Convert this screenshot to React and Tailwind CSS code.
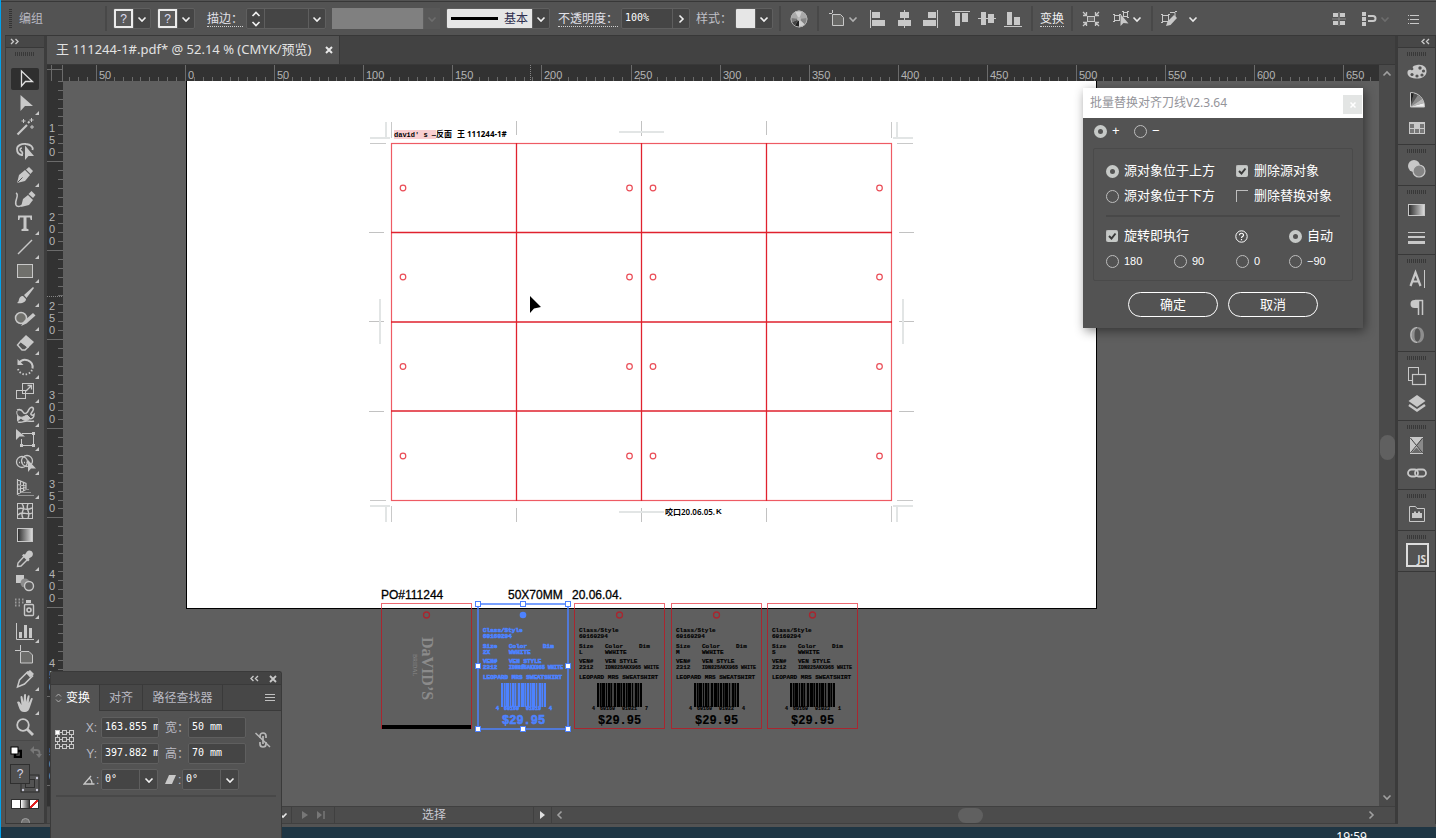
import React, { useEffect, useState } from "react";

const CJK = "font-['Liberation_Sans','Noto_Sans_CJK_SC',sans-serif]";
const UI = "font-['Noto_Sans','Noto_Sans_CJK_SC',sans-serif]";
const MONO = "font-['DejaVu_Sans_Mono','Noto_Sans_CJK_SC',monospace]";

/* ---------- small shared pieces ---------- */

function Icon({ size = 24, children, className = "" }) {
  return (
    <svg width={size} height={size} viewBox={`0 0 ${size} ${size}`} fill="none" stroke="currentColor" aria-hidden="true" className={`shrink-0 ${className}`}>
      {children}
    </svg>
  );
}

function Chevron({ dir = "down", className = "text-[#e8e8e8]" }) {
  const d = { down: "M2.500 4.500L6 8l3.500-3.500", up: "M2.500 7.500L6 4l3.500 3.500", right: "M4.500 2.500L8 6 4.500 9.500", left: "M7.500 2.500L4 6l3.500 3.500" }[dir];
  return (
    <svg width="12" height="12" viewBox="0 0 12 12" fill="none" stroke="currentColor" strokeWidth="1.600" aria-hidden="true" className={`shrink-0 ${className}`}>
      <path d={d} />
    </svg>
  );
}

function DoubleChevron({ left }) {
  return (
    <svg width="9" height="7" viewBox="0 0 9 7" fill="none" stroke="#c8c8c8" strokeWidth="1.400" aria-hidden="true">
      <path d={left ? "M3.500 1L1 3.500l2.500 2.500M8 1L5.500 3.500 8 6" : "M1 1l2.500 2.500L1 6M5.500 1L8 3.500 5.500 6"} />
    </svg>
  );
}

function Grip() {
  return <div className="h-[4px] w-[20px] bg-[repeating-linear-gradient(90deg,#383838_0_1px,transparent_1px_2px)]" />;
}

function Divider() {
  return <div className="h-[25px] w-[2px] shrink-0 bg-[#484848]" />;
}

function DropButton({ label, dir = "down", disabled, w = "w-[17px]" }) {
  return (
    <button type="button" aria-label={label} disabled={disabled} className={`flex h-full ${w} shrink-0 items-center justify-center border-l border-[#5e5e5e]`}>
      <Chevron dir={dir} className={disabled ? "text-[#6d6d6d]" : "text-[#f0f0f0]"} />
    </button>
  );
}

const box = "flex h-[21px] shrink-0 items-stretch overflow-hidden rounded-[2px] border border-[#5f5f5f] bg-[#454545]";

/* ---------- control bar ---------- */

function UnknownPaint({ label }) {
  return (
    <div className={`${box} w-[38px]`}>
      <button type="button" aria-label={label} className={`flex w-[19px] items-center justify-center border-2 border-[#ececec] bg-[#5a5a5a] text-[12px] leading-none text-[#dcdcf0] ${CJK}`}>?</button>
      <DropButton label={`${label}选项`} />
    </div>
  );
}

function AlignIcon({ kind }) {
  const shapes = {
    left: <><path d="M1.500 0v18" /><rect x="3" y="2" width="8" height="6" fill="currentColor" stroke="none" /><rect x="3" y="10" width="13" height="6" fill="currentColor" stroke="none" /></>,
    hcenter: <><path d="M9.500 0v18" /><rect x="5" y="2" width="9" height="6" fill="currentColor" stroke="none" /><rect x="3" y="10" width="13" height="6" fill="currentColor" stroke="none" /></>,
    right: <><path d="M16.500 0v18" /><rect x="7" y="2" width="8" height="6" fill="currentColor" stroke="none" /><rect x="2" y="10" width="13" height="6" fill="currentColor" stroke="none" /></>,
    top: <><path d="M0 1.500h18" /><rect x="3" y="3" width="5" height="13" fill="currentColor" stroke="none" /><rect x="10" y="3" width="6" height="9" fill="currentColor" stroke="none" /></>,
    vcenter: <><path d="M0 8.500h18" /><rect x="3" y="2" width="5" height="13" fill="currentColor" stroke="none" /><rect x="10" y="4" width="6" height="9" fill="currentColor" stroke="none" /></>,
    bottom: <><path d="M0 16.500h18" /><rect x="3" y="2" width="5" height="13" fill="currentColor" stroke="none" /><rect x="10" y="7" width="6" height="8" fill="currentColor" stroke="none" /></>,
  };
  return (
    <button type="button" aria-label={`align ${kind}`}>
      <Icon size={18}>{shapes[kind]}</Icon>
    </button>
  );
}

function ControlBar() {
  return (
    <header className={`flex h-[34px] shrink-0 items-center gap-[6px] border-b border-[#383838] bg-[#535353] pl-[4px] text-[12px] text-[#c8c8c8] ${CJK}`}>
      <div className="h-[20px] w-[3px] bg-[repeating-linear-gradient(180deg,#333_0_1px,transparent_1px_2px)]" />
      <span className="w-[81px] pl-px text-[#b9b9c2]">编组</span>
      <Divider />
      <UnknownPaint label="填色" />
      <UnknownPaint label="描边颜色" />
      <label htmlFor="stroke-w" className="w-[39px] shrink-0 pl-[6px] leading-[14px] whitespace-nowrap text-[#e0e0e8]">
        <span className="border-b border-dotted border-[#d0d0d0]">描边：</span>
      </label>
      <div className={`${box} w-[80px]`}>
        <button type="button" aria-label="描边粗细增减" className="flex w-[17px] shrink-0 flex-col items-center justify-center">
          <svg width="10" height="16" viewBox="0 0 10 16" fill="none" stroke="#f0f0f0" strokeWidth="1.600" aria-hidden="true"><path d="M1.500 5L5 1.500 8.500 5M1.500 11L5 14.500 8.500 11" /></svg>
        </button>
        <input id="stroke-w" type="text" className="min-w-0 flex-1 border-l border-[#5e5e5e] bg-transparent" />
        <DropButton label="描边粗细" />
      </div>
      <div className="flex h-[21px] w-[108px] shrink-0 items-stretch bg-[#585858]">
        <div className="flex-1 bg-[#808080]" />
        <DropButton label="变量宽度配置文件" disabled />
      </div>
      <div className={`${box} w-[104px]`}>
        <button type="button" className="flex flex-1 items-center gap-[6px] bg-[#e6e6e6] pl-[4px] text-[#303050]">
          <span className="h-[3px] w-[47px] bg-black" />
          <span>基本</span>
        </button>
        <DropButton label="画笔定义" />
      </div>
      <label htmlFor="opacity" className="w-[59px] shrink-0 pl-[2px] leading-[14px] whitespace-nowrap text-[#e0e0e8]">
        <span className="border-b border-dotted border-[#d0d0d0]">不透明度：</span>
      </label>
      <div className={`${box} w-[69px]`}>
        <input id="opacity" type="text" defaultValue="100%" className={`min-w-0 flex-1 bg-transparent pb-[3px] pl-[3px] text-[10px] text-white ${MONO}`} />
        <DropButton label="不透明度选项" dir="right" />
      </div>
      <span className="w-[33px] shrink-0 whitespace-nowrap text-[#c0c0c8]">样式：</span>
      <div className={`${box} w-[38px]`}>
        <button type="button" aria-label="图形样式" className="w-[19px] bg-[#e6e6e6]" />
        <DropButton label="样式选项" />
      </div>
      <Divider />
      <button type="button" aria-label="重新着色图稿" className="flex w-[24px] shrink-0 justify-center">
        <Icon size={18}>
          <g stroke="none">
            <circle cx="9" cy="9" r="8.300" fill="#a8a8a8" />
            <path d="M9 9L5 1.800A8.300 8.300 0 0 1 12 1.300z" fill="#cfcfcf" />
            <path d="M9 9l8.200-1A8.300 8.300 0 0 1 15 14.700z" fill="#858585" />
            <path d="M9 9l0 8.300A8.300 8.300 0 0 1 4.500 16z" fill="#222" />
            <path d="M9 9L4.500 16A8.300 8.300 0 0 1 1.500 12.500z" fill="#444" />
            <path d="M9 9L1.500 12.500A8.300 8.300 0 0 1 .9 8z" fill="#777" />
            <path d="M9 9v8.300a8.300 8.300 0 0 0 6-2.600z" fill="#d0d0d0" />
            <circle cx="9" cy="9" r="2" fill="#b8b8b8" />
          </g>
          <circle cx="9" cy="9" r="8" stroke="#b0b0b0" />
        </Icon>
      </button>
      <Divider />
      <button type="button" aria-label="对齐画板" className="flex w-[38px] shrink-0 items-center justify-center">
        <Icon size={18}><path d="M3.500 0v3M0 3.500h3M3.500 4.500v11h11v-8l-3-3z" fill="#686866" /></Icon>
        <Chevron className="text-[#b0b0b0]" />
      </button>
      <div className="flex shrink-0 items-center gap-[13px] pr-[3px]">
        <div className="flex gap-[8px]"><AlignIcon kind="left" /><AlignIcon kind="hcenter" /><AlignIcon kind="right" /></div>
        <div className="flex gap-[8px]"><AlignIcon kind="top" /><AlignIcon kind="vcenter" /><AlignIcon kind="bottom" /></div>
      </div>
      <Divider />
      <button type="button" className="w-[26px] shrink-0 pl-px text-left leading-[14px] whitespace-nowrap text-[#f0f0f0]">
        <span className="border-b border-dotted border-[#d0d0d0]">变换</span>
      </button>
      <Divider />
      <button type="button" aria-label="隔离选中的对象" className="flex w-[24px] shrink-0 justify-center">
        <Icon size={18}>
          <rect x="5.500" y="6.500" width="7" height="5" fill="#6c6c6c" />
          <path d="M1 2l3 3M4.500 2v3.500H1M17 2l-3 3M13.500 2v3.500H17M1 16l3-3M4.500 16v-3.500H1M17 16l-3-3M13.500 16v-3.500H17" strokeWidth="1.300" />
        </Icon>
      </button>
      <button type="button" aria-label="选择类似的对象" className="flex w-[36px] shrink-0 items-center justify-center">
        <Icon size={20}>
          <rect x="3.500" y="6.500" width="5" height="5" /><rect x="12.500" y="3.500" width="4" height="4" />
          <path d="M2 5.500h2M8 5.500h2M2 12.500h2M11 2.500h2M16 2.500h2M16 8.500h2" />
          <path d="M9.500 5v12l3-3 5 .5z" fill="currentColor" stroke="none" />
        </Icon>
        <Chevron />
      </button>
      <Divider />
      <button type="button" aria-label="编辑剪切路径" className="flex w-[40px] shrink-0 items-center justify-between">
        <Icon size={20}>
          <rect x="3.500" y="6.500" width="6" height="6" /><path d="M2 5.500h2M9 5.500h2M2 13.500h2M11 3.500h5v5M16 2.500h2" />
          <path d="M7 17l1.500-4.500L15 6l3 3-6.500 7z" fill="currentColor" stroke="none" />
        </Icon>
        <Chevron />
      </button>
      <div className="ml-auto flex items-center gap-[14px] pr-[15px]">
        <button type="button" aria-label="对齐像素网格">
          <Icon size={16}><path d="M8 1v14M1 8h14" stroke="#8a8a8a" /><g fill="currentColor" stroke="none"><rect x="2" y="2" width="5" height="4" /><rect x="9" y="2" width="5" height="4" /><rect x="2" y="10" width="5" height="4" /><rect x="9" y="10" width="5" height="4" /></g></Icon>
        </button>
        <button type="button" aria-label="对齐像素" className="flex items-center gap-[2px]">
          <Icon size={16}><g fill="currentColor" stroke="none"><rect x="1" y="1" width="4" height="4" /><rect x="1" y="6" width="4" height="4" /><rect x="1" y="11" width="4" height="4" /></g><path d="M7 5h5a2.500 2.500 0 0 1 0 5H7" strokeWidth="2" /></Icon>
          <Chevron className="text-[#6d6d6d]" />
        </button>
        <button type="button" aria-label="控制面板菜单">
          <Icon size={16}><path d="M5 4.500h9M5 8.500h9M5 12.500h9M3 4.500h1M3 8.500h1M3 12.500h1" /></Icon>
        </button>
      </div>
    </header>
  );
}

/* ---------- tool box ---------- */

const F = { fill: "currentColor", stroke: "none" };

const tools = [
  ["选择工具", 0, <path d="M8.500 4v15l4-4.500h7z" strokeWidth="1.300" />],
  ["直接选择工具", 1, <path d="M7.500 4v16l4.500-5h8z" {...F} />],
  ["魔棒工具", 0, <><path d="M4.500 19.500L14 10" strokeWidth="2.200" /><path d="M15 8l1.500-1.500" strokeWidth="2" /><path d="M10.500 4v4M8.500 6h4M18.500 3v4M16.500 5h4M19 10v4M17 12h4" /></>],
  ["套索工具", 0, <><path d="M10 16c-5 0-6-3-6-6 0-4 5-5.500 9-5 5 .5 7.500 3 6.500 6" strokeWidth="1.800" /><path d="M9 9c-2 0-2.500 2-1 3s2.500 3 0 4.500" strokeWidth="1.600" /><path d="M12 6.500V21l3.500-4H21z" {...F} /></>],
  ["钢笔工具", 1, <><path d="M4 20l2-8 6-5 5 5-5 6z" {...F} /><path d="M13 6.500l3-2.500 4 4-2.500 3z" {...F} /><path d="M4.500 19.500l5-5" stroke="#535353" /></>],
  ["曲率工具", 0, <><path d="M8 20l2-8 5-4 5 5-4 5z" {...F} /><path d="M15.500 7l3-3 4 4-2.500 3z" {...F} /><path d="M3 6c4 2-2 8 0 12 1 2 4 2 6 0" strokeWidth="1.500" /></>],
  ["文字工具", 1, <path d="M5 4.500h14v4.500h-1.300l-.7-2.500h-3.500v11l2 .7V20H8.500v-1.800l2-.7v-11H7L6.300 9H5z" {...F} />],
  ["直线段工具", 1, <path d="M5 19L19 5" strokeWidth="1.500" />],
  ["矩形工具", 1, <rect x="4.500" y="5.500" width="15" height="13" fill="#70706c" />],
  ["画笔工具", 1, <><path d="M20 4l-9 8 2.500 3L21 5z" {...F} /><path d="M10 13l3 3c0 3-4 5-9 4 2-1 1.500-3 2.500-5 1-1.700 2.500-2 3.500-2z" {...F} /></>],
  ["Shaper 工具", 1, <><circle cx="8" cy="11" r="5.500" fill="#70706c" strokeWidth="1.500" /><path d="M8 19l3-5 9-8 2.500 2.500-9 8z" {...F} /></>],
  ["橡皮擦工具", 1, <><path d="M13 4l8 7-6 6-8-7z" {...F} /><path d="M7.500 10.500L4.500 14l4.500 5h3l3-3z" strokeWidth="1.400" /></>],
  ["旋转工具", 1, <><path d="M6 8a7.500 7.500 0 0 1 13.500 5.500" strokeWidth="2" /><path d="M4.500 4v6h6z" {...F} /><path d="M5 14a7.500 7.500 0 0 0 14 1" strokeWidth="1.800" strokeDasharray="1.500 1.800" /></>],
  ["比例缩放工具", 1, <><rect x="9.500" y="4.500" width="11" height="10" /><rect x="3.500" y="11.500" width="9" height="8" /><path d="M13 12l5-5M14.500 6.500H18.500V10.500" strokeWidth="1.300" /></>],
  ["宽度工具", 1, <><path d="M4 7c3-1 5 0 6 2s3 2 4.500 0S16 5 18 4.500s3 1 2 3-3 3-2 4 2 1 3 0c0 3-2 5-5 4" strokeWidth="1.600" /><path d="M4 8c-1 4 2 7 6 6l4-2 3 3c-2 3-6 3-8 1s-3 2-5 2" fill="currentColor" strokeWidth="1" /><path d="M5 19c4 1 6-1 9-1s5 1 7 0" strokeWidth="1.400" /></>],
  ["自由变换工具", 1, <><path d="M3 2v11l3.500-3.500H12z" {...F} /><path d="M9 6.500h12M20.500 6v13M8.500 12v7M8 18.500h13" /><path d="M19 5h3v3h-3zM19 17h3v3h-3zM7 17h3v3H7z" {...F} /></>],
  ["形状生成器工具", 1, <><circle cx="9" cy="11" r="5.500" strokeWidth="1.300" /><circle cx="14" cy="10" r="5.500" strokeWidth="1.300" /><path d="M6 11.500h8" strokeDasharray="1 1.500" strokeWidth="1.500" /><path d="M15 9v12l3-3.500h5z" {...F} /></>],
  ["透视网格工具", 1, <><path d="M4.500 4v16M4 4.500l9 4v6l-9 5M7.500 6v12M10.500 7.500v9M4 9.500l9 1.500M4 14.500l9-2" strokeWidth="1.200" /><path d="M12 14.500h4M9 17.500h9M5 20.500h16" stroke="#949494" /></>],
  ["网格工具", 0, <><rect x="4.500" y="4.500" width="15" height="15" /><path d="M5 10c5-3 6 3 14-1M5 16c4-5 9 1 14-2M9 5c5 5-3 8 1 14M15 5c-3 5 3 8 0 14" strokeWidth="1.400" /></>],
  ["渐变工具", 0, <rect x="4.500" y="5.500" width="15" height="13" fill="url(#gradTool)" />],
  ["吸管工具", 1, <><path d="M14 4.500c3-3 8 1 5 5l-3 2 .5 1.500-1.500 1.500-6-6 1.500-1.500 1.500.5z" {...F} /><path d="M11 9.500l-6 6.500-.5 3.500 3.500-.5 6.500-6.500" strokeWidth="1.400" /></>],
  ["混合工具", 0, <><rect x="3" y="4" width="8" height="8" {...F} /><circle cx="12" cy="12" r="4.500" fill="#8c8c8c" stroke="none" /><circle cx="16" cy="15" r="4.500" fill="#5c5c5c" strokeWidth="1.400" /></>],
  ["符号喷枪工具", 1, <><rect x="11.500" y="9.500" width="9" height="11" rx="1" strokeWidth="1.400" /><circle cx="16" cy="15" r="2" strokeWidth="1.600" /><path d="M13 5h5v3h-5z" {...F} /><path d="M2 4.500h10M2 7.500h9M2 10.500h6" strokeWidth="2" strokeDasharray="1.500 2" stroke="#9a9a9a" /></>],
  ["柱形图工具", 1, <><path d="M3.500 4v16.500H21" /><rect x="6" y="13" width="3" height="6" {...F} /><rect x="11" y="6" width="3" height="13" {...F} /><rect x="16" y="9" width="3" height="10" {...F} /></>],
  ["画板工具", 0, <path d="M7.500 2v6M2 7.500h5M7.500 9v11h12v-8l-3.500-3.500H9z" fill="#6c6c6a" />],
  ["切片工具", 1, <><path d="M4.500 20l2-7 8-8 5 4-8 8z" strokeWidth="1.500" /><path d="M13 6l4-3 4 4-4 3.500z" {...F} /></>],
  ["抓手工具", 1, <path d="M4 11c1-1 2.500-.5 3 .5L8.500 14 7.500 6c0-1.500 1.800-1.500 2 0l1 5 .5-7c.2-1.300 2-1.300 2 0v7l1.700-6c.5-1.300 2-.8 1.900.4L15.700 12l2.300-4.500c.8-1 2-.3 1.600.8L17 16c-1 3-2 5-6 5-4.500 0-5-5-7-10z" {...F} />],
  ["缩放工具", 0, <><circle cx="10" cy="10" r="5.800" strokeWidth="1.800" /><path d="M14 14l6 6" strokeWidth="2.800" /></>],
];

function ToolBox() {
  return (
    <aside className="flex w-[42px] shrink-0 flex-col border-r-[3px] border-l border-[#3d3d3d] bg-[#535353] text-[#c8c8c8]">
      <button type="button" aria-label="展开工具" className="flex h-[12px] shrink-0 items-center border-b border-[#383838] bg-[#474747] pl-[4px]"><DoubleChevron /></button>
      <div className="flex h-[19px] shrink-0 justify-center pt-[4px]"><Grip /></div>
      <svg width="0" height="0" className="absolute" aria-hidden="true">
        <defs>
          <linearGradient id="gradTool"><stop offset="0" stopColor="#2a2a2a" /><stop offset="1" stopColor="#e0e0e0" /></linearGradient>
        </defs>
      </svg>
      <div className="flex shrink-0 flex-col items-center">
        {tools.map(([name, more, art], i) => (
          <button key={name} type="button" aria-label={name} className={`relative my-px flex h-[22px] w-[28px] items-center justify-center ${i === 0 ? "rounded-[2px] bg-[#2f2f2f] text-[#e0e0e0]" : ""}`}>
            <Icon>{art}</Icon>
            {more ? <svg width="4" height="4" viewBox="0 0 4 4" className="absolute right-0 -bottom-px" aria-hidden="true"><path d="M4 0v4H0z" fill="#c8c8c8" /></svg> : null}
          </button>
        ))}
      </div>
      <div className="mx-[4px] mt-px h-px shrink-0 bg-[#484848]" />
      <div className="flex h-[22px] shrink-0 items-center justify-between pr-[2px] pl-[4px]">
        <button type="button" aria-label="默认填色和描边">
          <Icon size={12}><rect x="5" y="5" width="6" height="6" fill="none" stroke="#000" strokeWidth="2.500" /><rect x="1" y="1" width="7" height="7" fill="#fff" stroke="#000" /></Icon>
        </button>
        <button type="button" aria-label="互换填色和描边" className="text-[#777]">
          <Icon size={12}><path d="M3 4h3.500a3 3 0 0 1 3 3v2" strokeWidth="1.800" /><path d="M0 4l4-4v8zM6 8h6l-3 4z" {...F} /></Icon>
        </button>
      </div>
      <button type="button" aria-label="填色和描边" className="flex h-[32px] shrink-0 justify-center">
        <Icon size={32} className="text-[#2f2f2f]">
          <rect x="12" y="12" width="18" height="17" fill="#535353" /><rect x="16.500" y="16.500" width="9" height="8" />
          <circle cx="14" cy="27" r="1.200" fill="#c8c8d8" stroke="none" /><circle cx="28" cy="27" r="1.200" fill="#c8c8d8" stroke="none" /><circle cx="28" cy="15" r="1.200" fill="#c8c8d8" stroke="none" />
          <rect x="1.500" y="1.500" width="19" height="19" fill="#505050" />
          <text x="11" y="15" textAnchor="middle" fontSize="12" fill="#d8d8e8" stroke="none" fontFamily="Liberation Sans, sans-serif">?</text>
        </Icon>
      </button>
      <div className="mx-auto mt-[4px] flex h-[10px] w-[28px] shrink-0 border border-[#2f2f2f]">
        <button type="button" aria-label="颜色" className="flex-1 bg-white" />
        <button type="button" aria-label="渐变" className="flex-1 border-x border-[#2f2f2f] bg-linear-to-r from-white to-[#444]" />
        <button type="button" aria-label="无" className="flex-1 bg-[linear-gradient(135deg,#fff_0_38%,#e02020_38%_62%,#fff_62%)]" />
      </div>
      <div className="flex min-h-0 flex-1 justify-center overflow-hidden border-b border-[#383838] pt-[9px]"><span className="size-[9px] shrink-0 rounded-full border border-[#a0a0a0] bg-[#757575]" /></div>
    </aside>
  );
}

/* ---------- rulers ---------- */

const PITCH = 8.91;

function useWindowSize() {
  const [size, setSize] = useState([window.innerWidth, window.innerHeight]);
  useEffect(() => {
    const update = () => setSize([window.innerWidth, window.innerHeight]);
    window.addEventListener("resize", update);
    return () => window.removeEventListener("resize", update);
  }, []);
  return size;
}

function TopRuler() {
  const [width] = useWindowSize();
  const end = width - 57;
  const ticks = [];
  for (let k = -13; 186 + k * PITCH < end; k++) ticks.push(k);
  return (
    <svg width="100%" height="16" className="block bg-[#323232]" aria-hidden="true">
      <g transform="translate(-63 -65)">
        {ticks.map((k) => {
          const x = Math.round(186 + k * PITCH) - 0.5;
          return <path key={k} d={`M${x} ${k % 10 === 0 ? 65 : 77}V81`} stroke="#6b6b6b" />;
        })}
        <path d="M530.500 65V81" stroke="#858585" strokeDasharray="1 1" />
        {ticks.filter((k) => k % 10 === 0 && 186 + k * PITCH + 22 < end).map((k) => (
          <text key={k} x={Math.round(186 + k * PITCH) + 2} y="79" fontSize="11" fill="#b4b4b4" fontFamily="Liberation Sans, sans-serif">{Math.abs(k * 5)}</text>
        ))}
      </g>
    </svg>
  );
}

function SideRuler() {
  const [, height] = useWindowSize();
  const end = height - 32;
  const ticks = [];
  for (let k = -9; 161 + k * PITCH < end; k++) ticks.push(k);
  return (
    <svg width="16" height="100%" className="block bg-[#323232]" aria-hidden="true">
      <g transform="translate(-47 -81)">
        {ticks.map((k) => {
          const y = Math.round(161 + k * PITCH) + 0.5;
          return <path key={k} d={`M${k % 10 === 0 ? 47 : 58} ${y}H63`} stroke="#6b6b6b" />;
        })}
        <path d="M47 296.500H63" stroke="#858585" strokeDasharray="1 1" />
        {ticks.filter((k) => k % 10 === 0).map((k) => (
          <g key={k} fontSize="11" fill="#b4b4b4" fontFamily="Liberation Sans, sans-serif">
            {String(150 + k * 5).split("").map((c, i) => (
              <text key={i} x="49" y={Math.round(161 + k * PITCH) - 29 + i * 12}>{c}</text>
            ))}
          </g>
        ))}
      </g>
    </svg>
  );
}

/* ---------- artwork ---------- */

const BARS = [2, 1, 1, 1, 3, 1, 1, 1, 2, 1, 1, 2, 2, 1, 3, 1, 1, 1, 2, 1, 1, 1, 3, 1, 1, 2, 2, 1, 1, 1, 2];

function Barcode({ x, y, color }) {
  let at = x;
  return (
    <g fill={color}>
      {BARS.map((w, i) => {
        const here = at;
        at += w;
        return <rect key={i} x={here} y={y} width={w} height="24" opacity={i % 2 === 0 ? 1 : i % 3 === 0 ? 0.65 : 0.3} />;
      })}
    </g>
  );
}

const tags = [
  { x: 478, size: "2X", code: ["60160", "01019", "4"], selected: true },
  { x: 574, size: "L", code: ["60160", "01021", "7"] },
  { x: 671, size: "M", code: ["60160", "01022", "4"] },
  { x: 767, size: "S", code: ["60160", "01023", "1"] },
];

function TagFrame({ x }) {
  return (
    <g fill="none">
      <rect x={x + 0.5} y="603.500" width="90" height="125" stroke="#a9262f" />
      <path d={`M${x} 603.500h91M${x + 0.5} 603v5M${x + 90.5} 603v5`} stroke="#ee6a72" />
      <circle cx={x + 45.5} cy="615" r="3" stroke="#a9262f" strokeWidth="1.300" />
    </g>
  );
}

function PriceTag({ x, size, code, selected }) {
  const ink = selected ? "#4d82ff" : "#000";
  const l = x + 5;
  return (
    <g>
      {!selected && <TagFrame x={x} />}
      <g fill={ink} stroke={ink} strokeWidth={selected ? 0.6 : 0.15} fontFamily="Liberation Mono, monospace" fontWeight="700" fontSize="6">
        <text x={l} y="632">Class/Style</text>
        <text x={l} y="638">60160294</text>
        <text x={l} y="648">Size</text><text x={l + 26} y="648">Color</text><text x={l + 60} y="648">Dim</text>
        <text x={l} y="654">{size}</text><text x={l + 26} y="654">WWHITE</text>
        <text x={l} y="663">VEN#</text><text x={l + 26} y="663">VEN STYLE</text>
        <text x={l} y="669">2312</text><text x={l + 26} y="669" fontSize="5">IDN825AKX965 WHITE</text>
        <text x={l} y="679">LEOPARD MRS SWEATSHIRT</text>
        <text x={x + 18} y="710" fontSize="5">4</text>
        <text x={x + 26} y="710" fontSize="5">{code[0]}</text>
        <text x={x + 48} y="710" fontSize="5">{code[1]}</text>
        <text x={x + 71} y="710" fontSize="5">{code[2]}</text>
        <text x={x + 24} y="724" fontSize="12">$29.95</text>
      </g>
      <Barcode x={x + 23} y={683} color={ink} />
    </g>
  );
}

function Selection({ x }) {
  const w = 90, y = 604, h = 125;
  const pts = [[0, 0], [w / 2, 0], [w, 0], [0, h / 2], [w, h / 2], [0, h], [w / 2, h], [w, h]];
  return (
    <g>
      <rect x={x} y={y} width={w} height={h} fill="none" stroke="#4d82ff" strokeWidth="1.500" />
      <circle cx={x + 45} cy="615" r="3.300" fill="#4d82ff" />
      <circle cx={x + 45} cy="666" r="2" fill="#4d82ff" />
      {pts.map(([dx, dy]) => (
        <rect key={`${dx}-${dy}`} x={Math.floor(x + dx) - 2.5} y={Math.floor(y + dy) - 2.5} width="5" height="5" fill="#fff" stroke="#4d82ff" />
      ))}
    </g>
  );
}

function CornerMarks() {
  return (
    <>
      <path d="M386 122V139M370 138H390" stroke="#e2e5e5" strokeWidth="2" />
      <path d="M391.500 122V138M370 143.500H386" stroke="#c9c9c9" />
    </>
  );
}

function CropMarks() {
  return (
    <g fill="none">
      <CornerMarks />
      <g transform="translate(1283 0) scale(-1 1)"><CornerMarks /></g>
      <g transform="translate(0 644) scale(1 -1)"><CornerMarks /></g>
      <g transform="translate(1283 644) scale(-1 -1)"><CornerMarks /></g>
      <path d="M516.500 121V135M641.500 121V136M766.500 121V135M516.500 508V522M641.500 508V522M766.500 508V522M369 232.500H384M369 321.500H384M369 411.500H384M899 232.500H914M899 321.500H914M899 411.500H914" stroke="#c2c2c2" />
      <path d="M619 132H664M619 512H664M380 299V344M903 299V344" stroke="#e2e5e5" strokeWidth="2" />
    </g>
  );
}

function Artwork() {
  return (
    <svg width="100%" height="100%" className="block bg-[#5f5f5f]">
      <g transform="translate(-63 -81)">
        <rect x="186.500" y="70" width="910" height="538.500" fill="#fff" stroke="#000" />
        <CropMarks />
        <rect x="391.500" y="143.500" width="500" height="357" fill="none" stroke="#ee5b64" strokeWidth="1.200" />
        <path d={[516.5, 641.5, 766.5].map((x) => `M${x} 143V501`).join("")} stroke="#e0222e" strokeWidth="1.300" />
        <path d={[232.5, 322, 411].map((y) => `M391 ${y}H892`).join("")} stroke="#e0222e" strokeWidth="1.300" />
        {[188, 277, 366.5, 456].map((cy) =>
          [403, 629.5, 653, 879.5].map((cx) => <circle key={`${cx}-${cy}`} cx={cx} cy={cy} r="2.800" fill="none" stroke="#ea4d57" strokeWidth="1.200" />)
        )}
        <rect x="394" y="130" width="42" height="9" fill="#f8cfd1" />
        <g fontSize="8" fontWeight="700" fontFamily="Noto Sans, Noto Sans CJK SC, sans-serif" fill="#000">
          <text x="394" y="137" fontSize="7" fontFamily="Liberation Mono, monospace">{"david' s —"}</text>
          <text x="436" y="137">反面</text>
          <text x="457" y="137">王</text>
          <text x="467" y="137">111244-1#</text>
          <text x="665" y="515" fontWeight="600">咬口20.06.05.</text>
          <text x="716" y="514" fontFamily="Liberation Sans, sans-serif">K</text>
        </g>
        <g fontSize="12" fontFamily="Liberation Sans, sans-serif" fill="#000" stroke="#000" strokeWidth="0.300">
          <text x="381" y="599">PO#111244</text>
          <text x="508" y="599">50X70MM</text>
          <text x="572" y="599">20.06.04.</text>
        </g>
        <TagFrame x={381} />
        <rect x="382" y="725" width="89" height="4" fill="#000" />
        <g fill="#8b8b8b" fontFamily="Liberation Serif, serif">
          <text transform="translate(422 637) rotate(90)" fontSize="16" fontWeight="700">DaVID’S</text>
          <text transform="translate(413 654) rotate(90)" fontSize="6">BRIDAL</text>
        </g>
        {tags.map((t) => <PriceTag key={t.x} {...t} />)}
        <Selection x={478} />
        <path d="M530 296v17l4-4.500 7-1.500z" fill="#000" />
      </g>
    </svg>
  );
}

/* ---------- document window ---------- */

function DocumentWindow() {
  return (
    <main className="flex min-w-0 flex-1 flex-col">
      <div className="flex h-[29px] shrink-0 border-b border-[#383838] bg-[#424242]">
        <div className={`flex items-center gap-[14px] border-r border-[#383838] bg-[#535353] pr-[6px] pl-[9px] text-[13px] whitespace-nowrap text-[#e2e2e2] ${UI}`}>
          <span>王 111244-1#.pdf* @ 52.14 % (CMYK/预览)</span>
          <button type="button" aria-label="关闭文档">
            <svg width="8" height="8" viewBox="0 0 8 8" stroke="#e8e8e8" strokeWidth="2" aria-hidden="true"><path d="M1 1l6 6M7 1L1 7" /></svg>
          </button>
        </div>
      </div>
      <div className="grid min-h-0 flex-1 grid-cols-[16px_minmax(0,1fr)_16px] grid-rows-[16px_minmax(0,1fr)_18px]">
        <svg width="16" height="16" className="bg-[#323232]" aria-hidden="true"><path d="M0 4.500h16M4.500 0v16M15.500 0v16" stroke="#6b6b6b" /></svg>
        <TopRuler />
        <div className="row-span-2 flex flex-col items-center justify-between bg-[#4a4a4a] py-[3px]">
          <button type="button" aria-label="向上滚动" className="flex"><Chevron dir="up" className="text-[#a0a0a0]" /></button>
          <span className="mt-[24px] h-[25px] w-[15px] rounded-full bg-[#606060]" />
          <button type="button" aria-label="向下滚动" className="flex"><Chevron className="text-[#a0a0a0]" /></button>
        </div>
        <SideRuler />
        <div className="min-h-0 min-w-0 overflow-hidden"><Artwork /></div>
        <div className={`col-span-3 flex items-stretch border-y border-[#404040] bg-[#4c4c4c] text-[12px] text-[#c8c8c8] ${CJK}`}>
          <div className="flex w-[245px] items-center justify-end border-r border-[#404040] pr-[2px]"><Chevron /></div>
          <div className="flex w-[42px] items-center justify-center gap-[8px]">
            <button type="button" aria-label="下一项"><Icon size={8} className="text-[#777]"><path d="M1 0l6 4-6 4z" {...F} /></Icon></button>
            <button type="button" aria-label="末项"><Icon size={8} className="text-[#777]"><path d="M0 0l5 4-5 4z" {...F} /><path d="M7 0v8" strokeWidth="1.500" /></Icon></button>
          </div>
          <div className="flex w-[200px] items-center justify-center border-x border-[#404040] text-[#c8c8d0]">选择</div>
          <button type="button" aria-label="状态栏选项" className="flex w-[18px] items-center justify-center border-r border-[#404040]"><Icon size={8} className="text-[#e0e0e0]"><path d="M1 0l5 4-5 4z" {...F} /></Icon></button>
          <div className="flex flex-1 items-center justify-between pr-[18px] pl-[2px]">
            <button type="button" aria-label="向左滚动"><Chevron dir="left" className="text-[#a0a0a0]" /></button>
            <span className="ml-[10px] h-[15px] w-[25px] rounded-full bg-[#606060]" />
            <button type="button" aria-label="向右滚动"><Chevron dir="right" className="text-[#a0a0a0]" /></button>
          </div>
        </div>
      </div>
    </main>
  );
}

/* ---------- panel dock ---------- */

const dockGroups = [
  [
    ["颜色", <><path d="M12 5c6-1 10 2 9.500 7-.5 5-6 7-11 6.500C5 18 2 15.500 2.500 12c.3-2 2-2.500 3.500-2 2 .7 3-.5 2-2s1-2.500 4-3z" {...F} /><g fill="#535353" stroke="none"><circle cx="15" cy="8" r="1.700" /><circle cx="18.500" cy="11" r="1.600" /><circle cx="17" cy="15" r="1.600" /><circle cx="12" cy="16" r="1.600" /><circle cx="7" cy="14.500" r="1.600" /></g></>],
    ["颜色参考", <><path d="M5 19V4l4 1z" fill="#222" stroke="none" /><path d="M5 19L9 5l4 2z" fill="#555" stroke="none" /><path d="M5 19l8-12 4 4z" fill="#8a8a8a" stroke="none" /><path d="M5 19l12-8 2 4z" fill="#b8b8b8" stroke="none" /><path d="M5 19l14-4 .5 4z" fill="#eee" stroke="none" /><path d="M5.500 4.500c8 0 14 6 14 14.500h-14z" /></>],
    ["色板", <><rect x="4" y="6" width="16" height="12" {...F} /><g fill="#777" stroke="none"><rect x="5" y="8" width="4" height="4" /><rect x="15" y="8" width="4" height="4" /><rect x="5" y="13" width="4" height="4" /><rect x="10" y="13" width="4" height="4" /><rect x="15" y="13" width="4" height="4" /></g></>],
  ],
  [["透明度", <><circle cx="9" cy="9" r="6" {...F} /><circle cx="14" cy="14" r="6" fill="#858585" strokeWidth="1.200" /></>]],
  [
    ["渐变", <rect x="3.500" y="6.500" width="16" height="11" fill="url(#gradTool)" />],
    ["描边", <><path d="M3 6.500h17" /><path d="M3 11h17" strokeWidth="2" /><path d="M3 16.500h17" strokeWidth="3" /></>],
  ],
  [
    ["字符", <><path d="M19.500 3v18" /><path d="M5.500 19L10.500 5.500 15.500 19M7.500 14.500h6.500" strokeWidth="2.200" /></>],
    ["段落", <><path d="M13 5H9.500a4 4 0 0 0 0 8H13z" {...F} /><path d="M13.500 5v15M17.500 5v15M10 5.500h8" strokeWidth="1.500" /></>],
    ["OpenType", <><path fillRule="evenodd" d="M12 4c4.500 0 7 3.500 7 8s-2.500 8-7 8-7-3.500-7-8 2.500-8 7-8zm0 1.300c-1.800.7-2.500 3.200-2.500 6.700s.7 6 2.500 6.700c2.300-.7 3.500-2.700 3.500-6.700S14.300 6 12 5.300z" fill="#8e8e8e" stroke="none" /><path d="M12 4.600C8 5 6 8 6 12s2 7 6 7.400" stroke="#c8c8c8" /></>],
  ],
  [
    ["变换", <><rect x="3.500" y="3.500" width="10" height="13" /><rect x="7.500" y="10.500" width="13" height="10" fill="#535353" strokeWidth="1.200" /></>],
    ["图层", <><path d="M12 3l8.500 6-8.500 6-8.500-6z" {...F} /><path d="M4 13l8 5.500 8-5.500" strokeWidth="2.500" /></>],
  ],
  [
    ["图形样式", <><rect x="5" y="4" width="13" height="17" {...F} /><path d="M18 4v17l-6.500-8.500z" fill="#8a8a8a" stroke="none" /><path d="M5 21l6.500-6.500L18 21z" fill="#6a6a6a" stroke="none" /><path d="M5 20.500l6.500-8 6.500 8M5 4.500l6.500 8 6.500-8" stroke="#444" /><path d="M5 4.500h13M5 20.500h13" /></>],
    ["链接", <><rect x="3" y="8.500" width="10" height="7" rx="3.500" strokeWidth="1.800" /><rect x="10" y="8.500" width="11" height="7" rx="3.500" strokeWidth="1.800" /></>],
  ],
  [["资源导出", <><path d="M4.500 4.500h6l1.500 2h7.500v13h-15z" /><path d="M7 16v-5h2V9.500h2V11h2V9.500h2V11h2v5z" {...F} /></>]],
];

function Dock() {
  return (
    <aside className="flex w-[41px] shrink-0 flex-col border-r border-l-[3px] border-[#3b3b3b] bg-[#535353] text-[#c8c8c8]">
      <button type="button" aria-label="展开面板" className="flex h-[12px] shrink-0 items-center justify-end border-b border-[#383838] bg-[#474747] pr-[5px]"><DoubleChevron left /></button>
      {dockGroups.map((group, i) => (
        <div key={i} className="flex shrink-0 flex-col items-center border-b border-[#383838] pt-[4px] pb-[2px]">
          <div className="h-[6px]"><Grip /></div>
          {group.map(([name, art]) => (
            <button key={name} type="button" aria-label={name} className="flex h-[28px] w-full items-center justify-center"><Icon>{art}</Icon></button>
          ))}
        </div>
      ))}
      <div className="flex shrink-0 flex-col items-center border-b border-[#383838] pt-[4px] pb-[2px]">
        <div className="h-[6px]"><Grip /></div>
        <button type="button" className={`my-[2px] ml-[2px] flex h-[24px] w-[23px] items-end justify-end border-2 border-[#dcdcdc] pr-px pb-px text-[10px] leading-none font-bold text-[#dcdcdc] ${UI}`}>JS</button>
      </div>
    </aside>
  );
}

/* ---------- script dialog ---------- */

function Radio({ name, label, checked, className = "" }) {
  return (
    <label className={`flex items-center gap-[5px] whitespace-nowrap ${className}`}>
      <input type="radio" name={name} defaultChecked={checked} className="size-[13px] shrink-0 appearance-none rounded-full border border-[#bdbdbd] checked:border-4 checked:border-[#c6c9c7]" />
      {label}
    </label>
  );
}

function Check({ label, checked }) {
  return (
    <label className="flex items-center gap-[6px] whitespace-nowrap">
      <span className="relative flex">
        <input type="checkbox" defaultChecked={checked} className="peer size-[12px] shrink-0 appearance-none border-t border-l border-[#bdbdbd] checked:rounded-[2px] checked:bg-[#c6c9c7]" />
        <svg width="12" height="12" viewBox="0 0 12 12" fill="none" stroke="#3a3a3a" strokeWidth="2" className="pointer-events-none absolute inset-0 hidden peer-checked:block" aria-hidden="true"><path d="M3 6l2.500 2.500 4-5" /></svg>
      </span>
      {label}
    </label>
  );
}

function ScriptDialog() {
  return (
    <section role="dialog" aria-labelledby="dlg-title" className={`absolute top-[88px] right-[73px] w-[280px] bg-[#535353] pb-[11px] text-[13px] leading-[18px] text-white shadow-[2px_3px_10px_rgba(0,0,0,0.45)] ${CJK}`}>
      <div className="flex h-[30px] items-center justify-between bg-white pr-px pl-[7px]">
        <h2 id="dlg-title" className={`text-[12px] text-[#94949a] ${UI}`}>批量替换对齐刀线V2.3.64</h2>
        <button type="button" aria-label="关闭" className="mt-[3px] flex size-[19px] items-center justify-center bg-[#e3e5e4]">
          <svg width="6" height="6" viewBox="0 0 6 6" stroke="#fff" strokeWidth="1.500" aria-hidden="true"><path d="M.5.5l5 5M5.500.5l-5 5" /></svg>
        </button>
      </div>
      <div className="flex items-center gap-[13px] pt-[4px] pl-[11px]">
        <Radio name="sign" label="+" checked className="w-[27px]" />
        <Radio name="sign" label="−" />
      </div>
      <div className="mx-[10px] mt-[8px] flex flex-col rounded-[2px] border border-[#4a4a4a] px-[12px] pt-[13px] pb-[10px]">
        <div className="grid grid-cols-[130px_1fr] gap-y-[7px]">
          <Radio name="layer" label="源对象位于上方" checked />
          <Check label="删除源对象" checked />
          <Radio name="layer" label="源对象位于下方" />
          <Check label="删除替换对象" />
        </div>
        <div className="my-[10px] h-[2px] bg-[#484848]" />
        <div className="grid grid-cols-[68px_62px_53px_1fr] gap-y-[7px]">
          <div className="col-span-2"><Check label="旋转即执行" checked /></div>
          <button type="button" aria-label="帮助" className="-ml-px flex items-center">
            <svg width="13" height="13" viewBox="0 0 13 13" fill="none" stroke="#fff" aria-hidden="true"><circle cx="6.500" cy="6.500" r="5.700" /><path d="M4.500 5.200c0-2.600 4-2.600 4 0 0 1.400-2 1.400-2 2.800M6.500 9v1.300" strokeWidth="1.200" /></svg>
          </button>
          <Radio name="angle-mode" label="自动" checked />
          <Radio name="angle" label="180" className="text-[11px]" />
          <Radio name="angle" label="90" className="text-[11px]" />
          <Radio name="angle" label="0" className="text-[11px]" />
          <Radio name="angle" label="−90" className="text-[11px]" />
        </div>
      </div>
      <div className="mt-[11px] flex justify-center gap-[10px]">
        <button type="button" className="h-[25px] w-[90px] rounded-full border border-white">确定</button>
        <button type="button" className="h-[25px] w-[90px] rounded-full border border-white">取消</button>
      </div>
    </section>
  );
}

/* ---------- transform panel ---------- */

function NumberField({ id, value, w = "w-[58px]", menu }) {
  return (
    <div className={`${box} ${w}`}>
      <input id={id} type="text" defaultValue={value} className={`min-w-0 flex-1 bg-transparent pb-[3px] pl-[3px] text-[10px] text-white ${MONO}`} />
      {menu ? <DropButton label={menu} w="w-[18px]" /> : null}
    </div>
  );
}

function TransformPanel() {
  const cells = [0, 7, 14];
  return (
    <section className={`absolute bottom-0 left-[49px] h-[167px] w-[232px] rounded-t-[3px] border border-b-0 border-[#3a3a3a] bg-[#535353] text-[12px] text-[#b9b9c2] ${CJK}`}>
      <div className="flex h-[12px] items-center justify-end gap-[10px] rounded-t-[3px] bg-[#434343] pr-[4px]">
        <button type="button" aria-label="折叠面板"><DoubleChevron left /></button>
        <button type="button" aria-label="关闭面板"><svg width="8" height="8" viewBox="0 0 8 8" stroke="#c8c8c8" strokeWidth="1.800" aria-hidden="true" className="mt-px"><path d="M1 1l6 6M7 1L1 7" /></svg></button>
      </div>
      <div role="tablist" className="flex h-[27px] border-y border-[#3a3a3a] bg-[#474747]">
        <button role="tab" aria-selected="true" type="button" className="-mb-px flex w-[49px] items-center gap-[4px] border-r border-[#3a3a3a] bg-[#535353] pl-[4px] text-white">
          <svg width="7" height="10" viewBox="0 0 7 10" fill="none" stroke="#b0b0b0" aria-hidden="true"><path d="M1 3.500L3.500 1 6 3.500M1 6.500L3.500 9 6 6.500" /></svg>
          变换
        </button>
        <button role="tab" aria-selected="false" type="button" className="w-[43px] border-r border-[#3a3a3a]">对齐</button>
        <button role="tab" aria-selected="false" type="button" className="w-[80px] border-r border-[#3a3a3a]">路径查找器</button>
        <button type="button" aria-label="面板菜单" className="flex flex-1 items-center justify-end pr-[5px]"><Icon size={12}><path d="M1 2.500h10M1 5.500h10M1 8.500h10" stroke="#c0c0c0" /></Icon></button>
      </div>
      <div className="flex items-start px-[4px] pt-[6px]">
        <svg width="20" height="20" viewBox="0 0 20 20" fill="none" stroke="#c8c8c8" className="mt-[13px] shrink-0" role="img" aria-label="参考点">
          <path d="M2 2.500h15M2 9.500h15M2 16.500h15M2.500 2v15M16.500 2v15" />
          {cells.map((cx) => cells.map((cy) => <rect key={`${cx}-${cy}`} x={cx + 0.5} y={cy + 0.5} width="4" height="4" fill={cx + cy === 0 ? "#fff" : "#535353"} />))}
        </svg>
        <div className="ml-[8px] flex flex-col gap-[5px]">
          {[["X:", "tx", "163.855 mm", "宽：", "tw", "50 mm"], ["Y:", "ty", "397.882 mm", "高：", "th", "70 mm"]].map(([a, ia, va, b, ib, vb]) => (
            <div key={a} className="flex items-center">
              <label htmlFor={ia} className="w-[18px] pr-[4px] text-right">{a}</label>
              <NumberField id={ia} value={va} />
              <label htmlFor={ib} className="w-[29px] pl-[6px] whitespace-nowrap">{b}</label>
              <NumberField id={ib} value={vb} />
            </div>
          ))}
          <div className="flex items-center">
            <label htmlFor="rot" className="flex w-[18px] items-center gap-px">
              <svg width="12" height="10" viewBox="0 0 12 10" fill="none" stroke="#c8c8c8" strokeWidth="1.300" aria-hidden="true" className="shrink-0"><path d="M11.500 9H1L8 1M6.500 3.500c2 1 2.500 3 2.500 5.500" /></svg>:
            </label>
            <NumberField id="rot" value="0°" w="w-[57px]" menu="旋转选项" />
            <label htmlFor="shear" className="flex w-[24px] items-center gap-px pl-[7px]">
              <svg width="12" height="9" viewBox="0 0 12 9" fill="#c8c8c8" aria-hidden="true" className="shrink-0"><path d="M4 0h7L7 9H0z" /></svg>:
            </label>
            <NumberField id="shear" value="0°" w="w-[57px]" menu="倾斜选项" />
          </div>
        </div>
        <button type="button" aria-label="约束宽度和高度比例" className="mt-[14px] ml-[8px] shrink-0 text-[#b8b8b8]">
          <Icon size={18}><path d="M6 7V5a3 3 0 0 1 6 0v2M6 11v2a3 3 0 0 0 6 0v-2M9 5v8" strokeWidth="1.700" /><path d="M1.500 2L16 16" strokeWidth="1.500" /></Icon>
        </button>
      </div>
      <div className="mx-[5px] mt-[5px] h-[2px] bg-[#484848]" />
    </section>
  );
}

/* ---------- page ---------- */

export default function App() {
  return (
    <div className="relative flex h-screen flex-col overflow-hidden border-l border-[#00a2ed] bg-[#535353]">
      <div className="h-[2px] shrink-0 border-b border-[#383838]" />
      <div className="flex min-h-0 flex-1 flex-col pl-[4px]">
        <ControlBar />
        <div className="flex min-h-0 flex-1 pb-[3px]">
          <ToolBox />
          <DocumentWindow />
          <Dock />
        </div>
      </div>
      <footer className={`flex h-[11px] shrink-0 justify-end overflow-hidden bg-[#1f3644] pt-[3px] pr-[69px] text-[12px] leading-[14px] text-white ${UI}`}>
        <time>19:59</time>
      </footer>
      <ScriptDialog />
      <TransformPanel />
    </div>
  );
}
